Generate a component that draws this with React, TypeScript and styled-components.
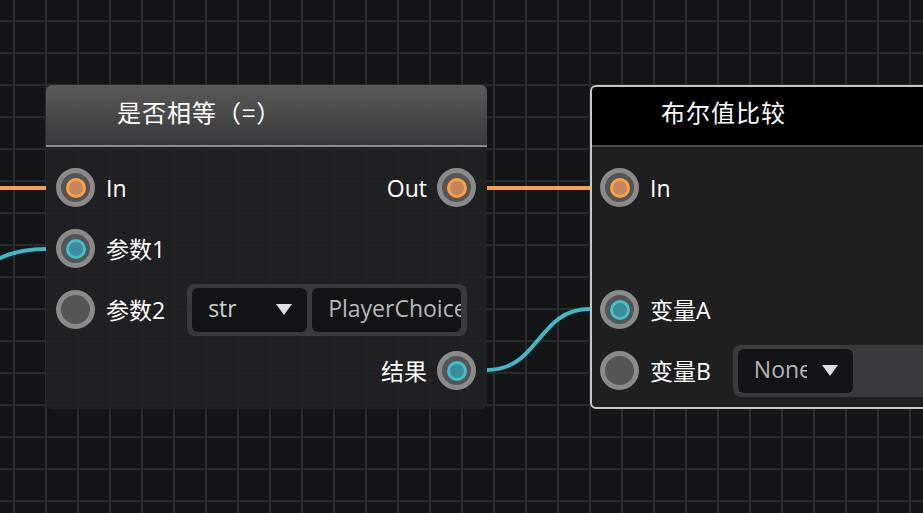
import styled, { createGlobalStyle } from "styled-components";

const GlobalStyle = createGlobalStyle`
  html, body {
    margin: 0;
    padding: 0;
    background: #141517;
    overflow: hidden;
  }
  #root {
    width: 923px;
    height: 513px;
  }
`;

type PinKind = "exec" | "data" | "empty";

const pinColors: Record<PinKind, { ring: string; fill: string } | null> = {
  exec: { ring: "#ff9f45", fill: "#c2875a" },
  data: { ring: "#3fc1cd", fill: "#3a8d96" },
  empty: null,
};

function App() {
  return (
    <>
      <GlobalStyle />
      <Canvas>
        <Wires width="923" height="513" viewBox="0 0 923 513">
          <path d="M 0 188 L 46 188" stroke="#ff9f45" />
          <path d="M 487 188 L 590 188" stroke="#ff9f45" />
          <path d="M -100 300 C -27 300, -27 249, 46 249" stroke="#3fb9c5" />
          <path d="M 487 370 C 540 370, 537 309, 590 309" stroke="#3fb9c5" />
        </Wires>

        <Node $x={46} $y={85}>
          <Header>
            <Title>是否相等（=）</Title>
          </Header>
          <Body>
            <Row>
              <Port>
                <Pin $kind="exec" />
                <Label>In</Label>
              </Port>
              <Port $right>
                <Label>Out</Label>
                <Pin $kind="exec" />
              </Port>
            </Row>
            <Row>
              <Port>
                <Pin $kind="data" />
                <Label>参数1</Label>
              </Port>
            </Row>
            <Row>
              <Port>
                <Pin $kind="empty" />
                <Label>参数2</Label>
              </Port>
              <Combo $width={280}>
                <Select>
                  <SelectText>str</SelectText>
                  <Caret />
                </Select>
                <TextField>PlayerChoice</TextField>
              </Combo>
            </Row>
            <Row>
              <Port $right>
                <Label>结果</Label>
                <Pin $kind="data" />
              </Port>
            </Row>
          </Body>
        </Node>

        <Node $x={590} $y={85} $selected>
          <Header $selected>
            <Title>布尔值比较</Title>
          </Header>
          <Body $selected>
            <Row>
              <Port>
                <Pin $kind="exec" />
                <Label>In</Label>
              </Port>
            </Row>
            <Row />
            <Row>
              <Port>
                <Pin $kind="data" />
                <Label>变量A</Label>
              </Port>
            </Row>
            <Row>
              <Port>
                <Pin $kind="empty" />
                <Label>变量B</Label>
              </Port>
              <Combo $width={300}>
                <Select $dim>
                  <SelectText>None</SelectText>
                  <Caret />
                </Select>
              </Combo>
            </Row>
          </Body>
        </Node>
      </Canvas>
    </>
  );
}

export default App;

const Canvas = styled.div`
  position: relative;
  width: 923px;
  height: 513px;
  overflow: hidden;
  background-color: #141517;
  background-image: linear-gradient(to right, #2a2b2d 2px, transparent 2px),
    linear-gradient(to bottom, #2a2b2d 2px, transparent 2px);
  background-size: 32px 32px;
  background-position: 13px 20px;
  font-family: "Open Sans", "Noto Sans CJK SC", sans-serif;
`;

const Wires = styled.svg`
  position: absolute;
  left: 0;
  top: 0;
  overflow: visible;

  path {
    fill: none;
    stroke-width: 4;
  }
`;

const Node = styled.div<{ $x: number; $y: number; $selected?: boolean }>`
  position: absolute;
  left: ${(p) => p.$x}px;
  top: ${(p) => p.$y}px;
  width: 441px;
  display: flex;
  flex-direction: column;
  border-radius: 6px;
  overflow: hidden;
  outline: ${(p) => (p.$selected ? "2px solid #c6c6c6" : "none")};
  outline-offset: -2px;
`;

const Header = styled.div<{ $selected?: boolean }>`
  height: 60px;
  display: flex;
  align-items: center;
  padding-left: 71px;
  background: ${(p) =>
    p.$selected
      ? "#000000"
      : "linear-gradient(to bottom, rgba(92, 92, 92, 0.96), rgba(58, 59, 60, 0.94))"};
  border-bottom: 2px solid ${(p) => (p.$selected ? "#4c4c4c" : "#8a8a8a")};
`;

const Title = styled.div`
  color: #ffffff;
  font-family: "Noto Sans CJK SC", sans-serif;
  font-size: 24px;
  line-height: 1;
  letter-spacing: 1px;
  margin-top: -7px;
`;

const Body = styled.div<{ $selected?: boolean }>`
  display: flex;
  flex-direction: column;
  padding: 10px 0 8px;
  background: ${(p) => (p.$selected ? "#1f1f20" : "rgba(32, 33, 35, 0.93)")};
`;

const Row = styled.div`
  height: 61px;
  display: flex;
  align-items: center;
  padding: 0 11px 0 10px;
`;

const Port = styled.div<{ $right?: boolean }>`
  display: flex;
  align-items: center;
  gap: ${(p) => (p.$right ? 10 : 11)}px;
  margin-left: ${(p) => (p.$right ? "auto" : "0")};
`;

const Pin = styled.span<{ $kind: PinKind }>`
  position: relative;
  width: 39px;
  height: 39px;
  box-sizing: border-box;
  border-radius: 50%;
  border: 5px solid #8a8a8a;
  background: #555555;
  flex-shrink: 0;

  &::after {
    content: "";
    display: ${(p) => (pinColors[p.$kind] ? "block" : "none")};
    position: absolute;
    left: 50%;
    top: 50%;
    width: 20px;
    height: 20px;
    box-sizing: border-box;
    margin: -10px 0 0 -10px;
    border-radius: 50%;
    border: 3px solid ${(p) => pinColors[p.$kind]?.ring ?? "transparent"};
    background: ${(p) => pinColors[p.$kind]?.fill ?? "transparent"};
  }
`;

const Label = styled.span`
  color: #ffffff;
  font-size: 23px;
  line-height: 1;
  white-space: nowrap;
  margin-top: 1px;
`;

const Combo = styled.div<{ $width: number }>`
  margin-left: 22px;
  width: ${(p) => p.$width}px;
  height: 52px;
  box-sizing: border-box;
  flex-shrink: 0;
  display: flex;
  align-items: center;
  gap: 5px;
  padding: 0 6px 0 5px;
  background: #393a3b;
  border-radius: 8px;
`;

const Select = styled.div<{ $dim?: boolean }>`
  width: 115px;
  height: 44px;
  box-sizing: border-box;
  flex-shrink: 0;
  display: flex;
  align-items: center;
  padding: 0 15px 0 16px;
  background: #121315;
  border-radius: 6px;
  color: ${(p) => (p.$dim ? "#b4b4b4" : "#cfcfcf")};
`;

const SelectText = styled.span`
  flex: 1;
  overflow: hidden;
  white-space: nowrap;
  font-size: 23px;
  line-height: 1;
  padding-bottom: 2px;
`;

const Caret = styled.span`
  width: 0;
  height: 0;
  margin-left: 15px;
  border-left: 8px solid transparent;
  border-right: 8px solid transparent;
  border-top: 11px solid #dedede;
`;

const TextField = styled.div`
  flex: 1;
  height: 44px;
  box-sizing: border-box;
  display: flex;
  align-items: center;
  padding-left: 16px;
  overflow: hidden;
  white-space: nowrap;
  background: #121315;
  border-radius: 6px;
  color: #b8b8b8;
  font-size: 23px;
  line-height: 1;
  padding-bottom: 2px;
`;
